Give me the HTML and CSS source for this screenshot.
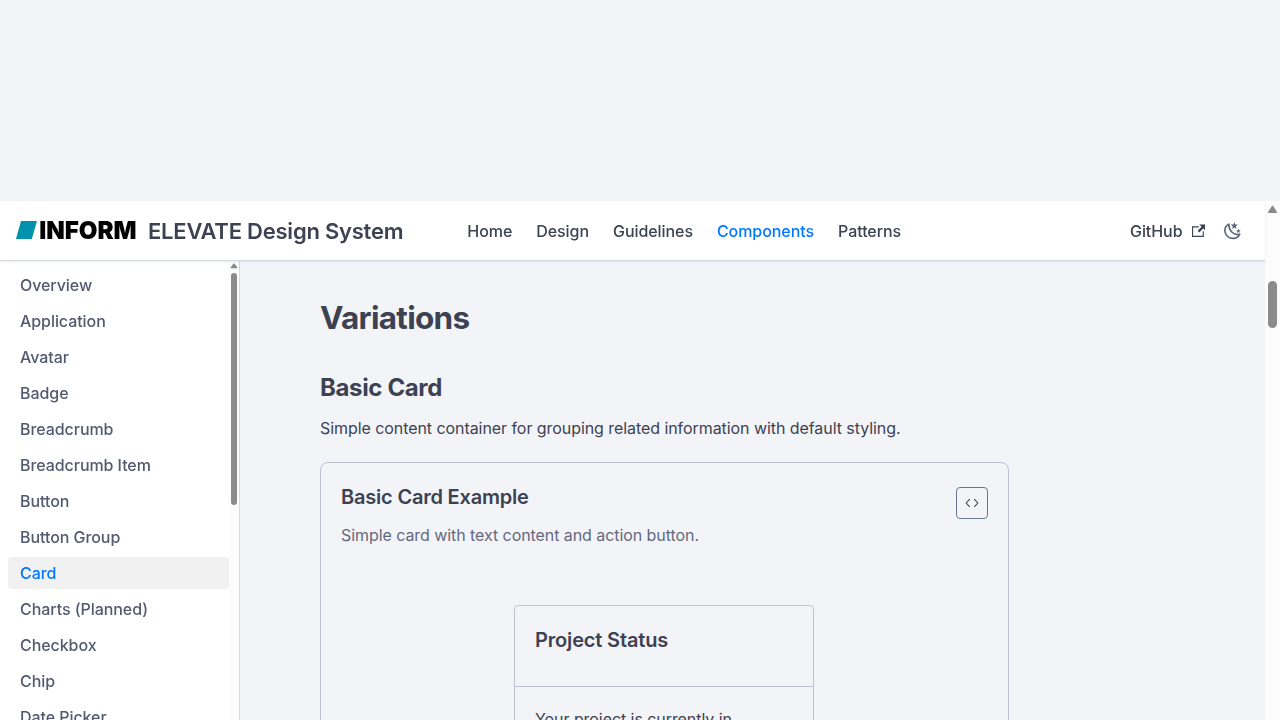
FILE: index.html
```html
<!DOCTYPE html>
<html lang="en">
<head>
<meta charset="utf-8">
<title>Card - ELEVATE Design System</title>
<link rel="stylesheet" href="styles.css">
</head>
<body>
<div class="viewport">
  <div class="page">
    <header class="navbar">
      <a class="brand">
        <svg class="logo" viewBox="0 0 120 20" width="120" height="20" aria-label="INFORM">
          <path d="M5 1H21L15.800 19H0Z" fill="#0092ad"/>
          <text class="logo-text" x="23.200" y="19" textLength="97.400" lengthAdjust="spacingAndGlyphs">INFORM</text>
        </svg>
        <span class="brand-title">ELEVATE Design System</span>
      </a>
      <nav class="nav-links">
        <a>Home</a><a>Design</a><a>Guidelines</a><a class="active">Components</a><a>Patterns</a>
      </nav>
      <div class="nav-right">
        <a class="github">GitHub
          <svg width="13.500" height="13.500" viewBox="0 0 24 24" fill="currentColor"><path d="M21 13v10h-21v-19h12v2h-10v15h17v-8h2zm3-12h-10.988l4.035 4-6.977 7.070 2.828 2.828 6.977-7.070 4.125 4.172v-11z"/></svg>
        </a>
        <svg class="moon" width="18" height="18" viewBox="0 0 18 18">
          <path d="M4.900 2.100C1.700 3.600 .4 6.800 1.100 10.100C1.900 13.900 5.100 16.400 8.800 16.400C11.800 16.400 14.400 14.800 15.700 12.300C9.300 13.300 4.400 8.500 4.900 2.100Z" fill="none" stroke="currentColor" stroke-width="1.600" stroke-linejoin="round"/>
          <path d="M10.300 0L11.200 2.500L13.900 2.600L11.800 4.300L12.500 6.900L10.300 5.400L8.100 6.900L8.800 4.300L6.700 2.600L9.400 2.500ZM14.400 6.500L15 8.200L16.800 8.250L15.400 9.350L15.900 11.100L14.400 10.100L12.900 11.100L13.400 9.350L12 8.250L13.800 8.200Z" fill="currentColor"/>
        </svg>
      </div>
    </header>
    <div class="body">
      <aside class="sidebar">
        <nav class="menu">
          <a>Overview</a><a>Application</a><a>Avatar</a><a>Badge</a><a>Breadcrumb</a><a>Breadcrumb Item</a><a>Button</a><a>Button Group</a><a class="active">Card</a><a>Charts (Planned)</a><a>Checkbox</a><a>Chip</a><a>Date Picker</a>
        </nav>
        <div class="side-scroll">
          <svg width="8" height="6" viewBox="0 0 8 6"><path d="M3.400 .8Q4 0 4.600 .8L7.300 4.300Q7.700 5.300 6.700 5.300H1.300Q.3 5.300 .7 4.300Z" fill="#8b8b8b"/></svg>
          <div class="side-thumb"></div>
        </div>
      </aside>
      <main class="content">
        <h2>Variations</h2>
        <h3>Basic Card</h3>
        <p class="lead">Simple content container for grouping related information with default styling.</p>
        <section class="example">
          <div class="example-head">
            <div>
              <h4>Basic Card Example</h4>
              <p>Simple card with text content and action button.</p>
            </div>
            <button class="code-button" aria-label="Show code">
              <svg width="14" height="10" viewBox="0 0 14 10"><path d="M4.700 1.200L1.200 5L4.700 8.800M9.300 1.200L12.800 5L9.300 8.800" fill="none" stroke="currentColor" stroke-width="1.100"/></svg>
            </button>
          </div>
          <article class="card">
            <header class="card-header">Project Status</header>
            <div class="card-body">Your project is currently in</div>
          </article>
        </section>
      </main>
    </div>
  </div>
  <div class="page-scroll">
    <svg width="11" height="9" viewBox="0 0 11 9"><path d="M4.900 .9Q5.500 .3 6.100 .9L10 6.900Q10.300 8 9.300 8H1.700Q.7 8 1 6.900Z" fill="#8b8b8b"/></svg>
    <div class="page-thumb"></div>
  </div>
</div>
</body>
</html>
```

FILE: styles.css
```css
* { box-sizing: border-box; }
html, body { margin: 0; height: 100%; overflow: hidden; }
body {
  padding-top: 201px;
  background: #f3f4f8;
  color: #3d4252;
  font: 16px/24px Inter, "Liberation Sans", sans-serif;
  letter-spacing: -.065px;
}
h2, h3, h4, p { margin: 0; }
.viewport { display: flex; height: 519px; }
.page { flex: 1; display: flex; flex-direction: column; min-width: 0; }
.navbar {
  position: relative;
  z-index: 1;
  display: flex;
  align-items: center;
  flex: 0 0 60px;
  padding: 1px 23px 0 16px;
  background: #fff;
  border-bottom: 1px solid #d6d8e2;
  box-shadow: 0 1px 2px rgba(60, 65, 90, .1);
  font-weight: 500;
  will-change: transform;
}
.brand { display: flex; align-items: center; gap: 12px; width: 451.300px; }
.logo { margin-bottom: 2px; overflow: visible; }
.logo-text { font: 900 24.700px Inter, sans-serif; letter-spacing: 0; fill: #000; }
.brand-title { font-size: 22px; font-weight: 600; letter-spacing: -.23px; white-space: nowrap; }
.nav-links { display: flex; gap: 24px; }
.nav-links .active, .menu .active { color: #0077ff; }
.nav-right { display: flex; align-items: center; gap: 19px; margin-left: auto; }
.github { display: flex; align-items: center; gap: 9px; }
.moon { color: #56637c; }
.body { display: flex; flex: 1; min-height: 0; }
.sidebar {
  display: flex;
  width: 240px;
  background: #fff;
  border-right: 1px solid #d6d8e2;
  overflow: hidden;
  will-change: transform;
}
.menu { display: flex; flex-direction: column; gap: 4px; flex: 1; padding: 8px 0 0 8px; }
.menu a { flex: none; height: 32px; padding: 0 12px; line-height: 32px; font-weight: 500; color: #535a70; border-radius: 4px; }
.menu .active { background: #f1f1f1; color: #0077ff; }
.side-scroll { display: flex; flex-direction: column; align-items: center; gap: 4px; width: 10px; padding-top: 2px; background: #fcfcfc; }
.side-thumb { width: 6px; height: 232px; border-radius: 3px; background: #8b8b8b; }
.content { flex: 1; padding: 37px 256px 0 80px; overflow: hidden; }
.content h2 { font-size: 31.500px; line-height: 40px; font-weight: 700; letter-spacing: -.7px; }
.content h3 { margin-top: 34px; font-size: 24px; line-height: 32px; font-weight: 700; letter-spacing: -.36px; }
.lead { margin-top: 12px; }
.example { height: 400px; margin-top: 22px; padding: 20px; border: 1px solid #bfc1ce; border-radius: 8px; }
.example-head { display: flex; justify-content: space-between; height: 80px; }
.example-head h4 { font-size: 20px; line-height: 28px; font-weight: 600; letter-spacing: -.2px; }
.example-head p { margin-top: 12px; color: #636980; }
.code-button { display: flex; align-items: center; justify-content: center; width: 32px; height: 32px; margin-top: 4px; padding: 0; border: 1px solid #6b7791; border-radius: 4px; background: none; color: #3d4252; }
.card { width: 300px; height: 250px; margin: 42px 0 0 173px; border: 1px solid #bfc1ce; border-radius: 4px; }
.card-header { height: 81px; padding: 20px; border-bottom: 1px solid #bfc1ce; font-size: 20px; line-height: 28px; font-weight: 600; letter-spacing: -.16px; }
.card-body { padding: 20px; }
.page-scroll { display: flex; flex-direction: column; align-items: center; gap: 67px; width: 15px; padding-top: 4px; background: #fcfcfc; }
.page-thumb { width: 9px; height: 47px; border-radius: 5px; background: #8b8b8b; }
```
